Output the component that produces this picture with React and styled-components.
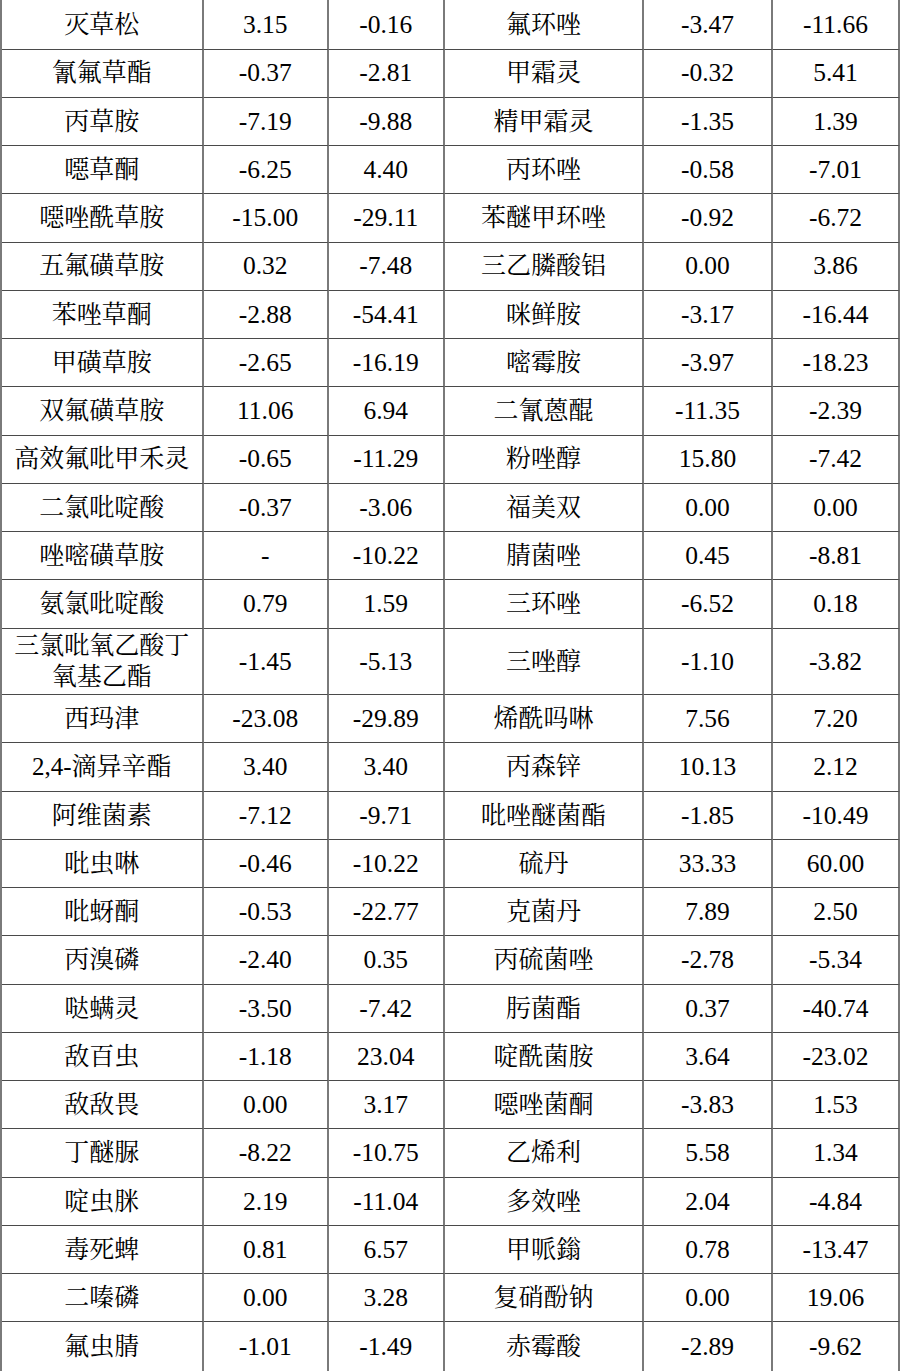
import * as React from "react"
import styled, { createGlobalStyle } from "styled-components"

const GlobalStyle = createGlobalStyle`
  html, body {
    margin: 0;
    padding: 0;
    background: #fff;
    overflow: hidden;
  }
`

const rows = [
  ["灭草松", "3.15", "-0.16", "氟环唑", "-3.47", "-11.66"],
  ["氰氟草酯", "-0.37", "-2.81", "甲霜灵", "-0.32", "5.41"],
  ["丙草胺", "-7.19", "-9.88", "精甲霜灵", "-1.35", "1.39"],
  ["噁草酮", "-6.25", "4.40", "丙环唑", "-0.58", "-7.01"],
  ["噁唑酰草胺", "-15.00", "-29.11", "苯醚甲环唑", "-0.92", "-6.72"],
  ["五氟磺草胺", "0.32", "-7.48", "三乙膦酸铝", "0.00", "3.86"],
  ["苯唑草酮", "-2.88", "-54.41", "咪鲜胺", "-3.17", "-16.44"],
  ["甲磺草胺", "-2.65", "-16.19", "嘧霉胺", "-3.97", "-18.23"],
  ["双氟磺草胺", "11.06", "6.94", "二氰蒽醌", "-11.35", "-2.39"],
  ["高效氟吡甲禾灵", "-0.65", "-11.29", "粉唑醇", "15.80", "-7.42"],
  ["二氯吡啶酸", "-0.37", "-3.06", "福美双", "0.00", "0.00"],
  ["唑嘧磺草胺", "-", "-10.22", "腈菌唑", "0.45", "-8.81"],
  ["氨氯吡啶酸", "0.79", "1.59", "三环唑", "-6.52", "0.18"],
  [["三氯吡氧乙酸丁", "氧基乙酯"], "-1.45", "-5.13", "三唑醇", "-1.10", "-3.82"],
  ["西玛津", "-23.08", "-29.89", "烯酰吗啉", "7.56", "7.20"],
  ["2,4-滴异辛酯", "3.40", "3.40", "丙森锌", "10.13", "2.12"],
  ["阿维菌素", "-7.12", "-9.71", "吡唑醚菌酯", "-1.85", "-10.49"],
  ["吡虫啉", "-0.46", "-10.22", "硫丹", "33.33", "60.00"],
  ["吡蚜酮", "-0.53", "-22.77", "克菌丹", "7.89", "2.50"],
  ["丙溴磷", "-2.40", "0.35", "丙硫菌唑", "-2.78", "-5.34"],
  ["哒螨灵", "-3.50", "-7.42", "肟菌酯", "0.37", "-40.74"],
  ["敌百虫", "-1.18", "23.04", "啶酰菌胺", "3.64", "-23.02"],
  ["敌敌畏", "0.00", "3.17", "噁唑菌酮", "-3.83", "1.53"],
  ["丁醚脲", "-8.22", "-10.75", "乙烯利", "5.58", "1.34"],
  ["啶虫脒", "2.19", "-11.04", "多效唑", "2.04", "-4.84"],
  ["毒死蜱", "0.81", "6.57", "甲哌鎓", "0.78", "-13.47"],
  ["二嗪磷", "0.00", "3.28", "复硝酚钠", "0.00", "19.06"],
  ["氟虫腈", "-1.01", "-1.49", "赤霉酸", "-2.89", "-9.62"],
]

const Table = styled.div`
  display: grid;
  grid-template-columns: 201.5px 125.5px 115.5px 199.8px 128.4px 127.6px;
  grid-template-rows: 49.5px repeat(12, 48.25px) 66.7px repeat(14, 48.25px);
  width: 900px;
  border-left: 2px solid #7a7a7a;
  box-sizing: border-box;
  color: #000;
  font-family: "Liberation Serif", "Noto Serif CJK SC", "Noto Sans CJK SC", serif;
`

const Cell = styled.div`
  display: flex;
  align-items: center;
  justify-content: center;
  flex-direction: column;
  box-sizing: border-box;
  border-right: 2px solid #7a7a7a;
  border-bottom: ${({ $last }) => ($last ? "none" : "1px solid #4a4a4a")};
  font-size: ${({ $name }) => ($name ? "25px" : "25.5px")};
  line-height: 31.5px;
  text-align: center;
  white-space: nowrap;
  overflow: hidden;
`

const App = () => (
  <>
    <GlobalStyle />
    <Table>
      {rows.map((row, r) =>
        row.map((value, c) => (
          <Cell
            key={`${r}-${c}`}
            $name={c === 0 || c === 3}
            $last={r === rows.length - 1}
          >
            {Array.isArray(value)
              ? value.map((line) => <span key={line}>{line}</span>)
              : value}
          </Cell>
        ))
      )}
    </Table>
  </>
)

export default App
